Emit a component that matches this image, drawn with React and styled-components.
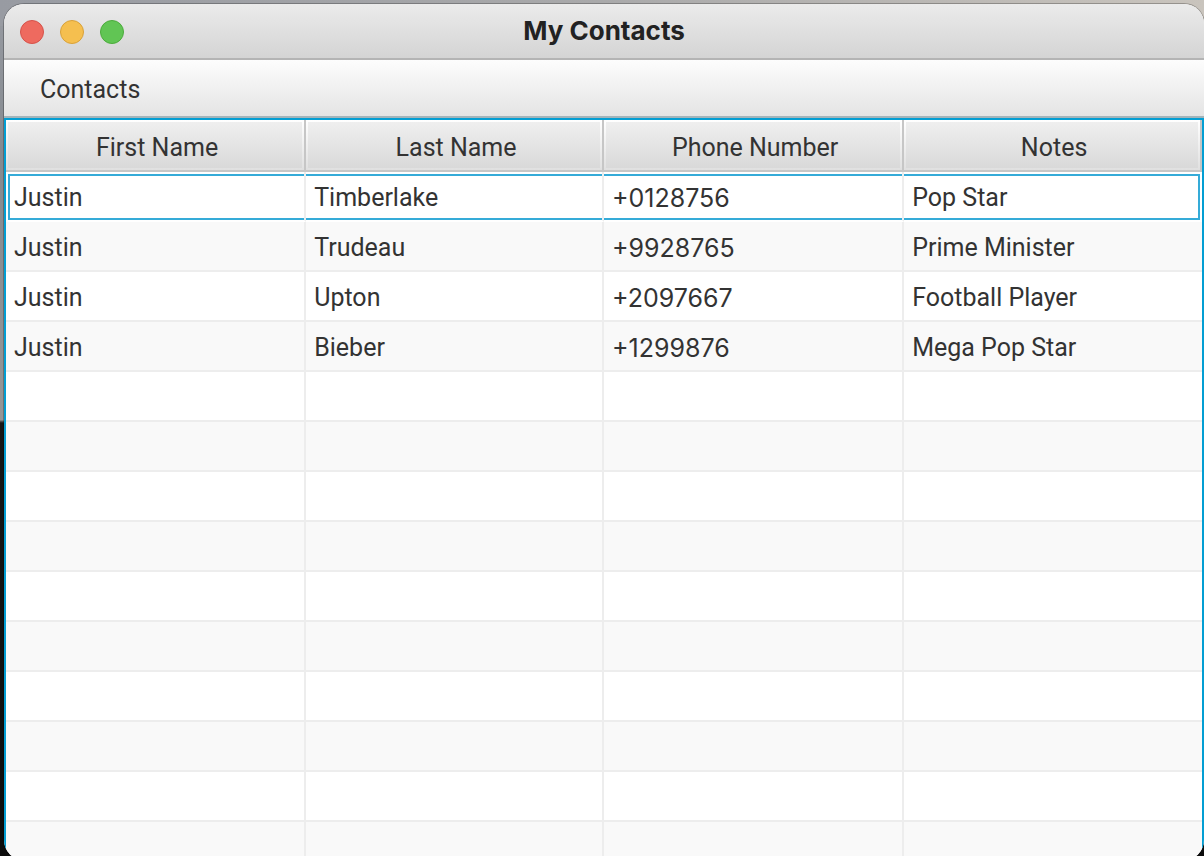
import React from "react";
import styled, { createGlobalStyle, css } from "styled-components";

const FONT = 'Roboto, "Liberation Sans", sans-serif';
const WIDE_FONT = 'Inter, "Liberation Sans", sans-serif';
const ACCENT = "#039ed3";

const GlobalStyle = createGlobalStyle`
  *, *::before, *::after { box-sizing: border-box; }
  body { margin: 0; overflow: hidden; }
`;

const Desktop = styled.div`
  height: 100vh;
  padding: 4px 0 0 4px;
  overflow: hidden;
  font-family: ${FONT};
  color: #333333;
  background:
    linear-gradient(90deg, #989ba2, #a9a9aa 50%, #c9c4bd) top / 100% 26px no-repeat,
    linear-gradient(180deg, #989ba2 0, #858a90 150px, #969696 420px, #5d5d5d 421px, #161616 423px, #0c0c0c 100%);
`;

const Window = styled.main`
  display: flex;
  flex-direction: column;
  height: 100vh;
  border-radius: 20px;
  overflow: hidden;
  background: #ffffff;
  box-shadow: 0 0 0 1px rgba(0, 0, 0, 0.25);
`;

const TitleBar = styled.header`
  display: grid;
  grid-template-columns: 1fr auto 1fr;
  align-items: center;
  flex: none;
  height: 56px;
  padding: 2px 16px 0;
  background: linear-gradient(#ebebeb, #d4d4d4);
  border-bottom: 2px solid #b4b4b4;
`;

const WindowControls = styled.div`
  display: flex;
  gap: 16px;
`;

const ControlButton = styled.button`
  width: 24px;
  height: 24px;
  padding: 0;
  border: 1px solid ${(p) => p.$edge};
  border-radius: 50%;
  background: ${(p) => p.$fill};
`;

const Title = styled.h1`
  margin: 0;
  padding-bottom: 2px;
  font-family: ${WIDE_FONT};
  font-size: 26px;
  line-height: 32px;
  font-weight: 700;
  color: #222222;
`;

const MenuBar = styled.nav`
  display: flex;
  flex: none;
  height: 58px;
  padding: 4px 20px 0;
  background: linear-gradient(#fdfdfd, #e4e4e4);
  border-bottom: 2px solid #a3b4ba;
`;

const MenuButton = styled.button`
  padding: 0 16px;
  border: 0;
  background: transparent;
  font: 400 25px/32px ${FONT};
  color: inherit;
`;

const TableFrame = styled.section`
  flex: 1;
  min-height: 0;
  overflow: hidden;
  border: 2px solid ${ACCENT};
  border-bottom: 0;
`;

const Table = styled.table`
  width: 100%;
  table-layout: fixed;
  border-collapse: separate;
  border-spacing: 0;
  font-size: 25px;
  line-height: 32px;
`;

const Column = styled.col`
  width: ${(p) => p.$width};
`;

const HeaderCell = styled.th`
  height: 52px;
  padding: 6px 0 0 4px;
  font-weight: 400;
  text-align: center;
  border-right: 2px solid #c6c6c6;
  border-bottom: 2px solid #c6c6c6;
  background:
    linear-gradient(#efefef, #d9d9d9) padding-box center / calc(100% - 4px) calc(100% - 4px) no-repeat,
    linear-gradient(#ffffff, #e0e0e0) padding-box;
`;

const Cell = styled.td`
  height: 50px;
  padding: 2px 0 0;
  border-right: 2px solid #ededed;
  border-bottom: 2px solid #ededed;

  &:last-child { border-right: 0; }
`;

const CellText = styled.div`
  padding: 2px 8px 0;
  overflow: hidden;
  white-space: nowrap;
  font-family: ${(p) => (p.$numeric ? WIDE_FONT : FONT)};
`;

const focused = css`
  ${Cell} {
    border-bottom-color: #ffffff;
  }
  ${CellText} {
    height: 46px;
    padding: 6px 8px 4px;
    border: 0 solid #35abd8;
    border-width: 2px 0;
  }
  ${Cell}:first-child ${CellText} {
    margin-left: 2px;
    padding-left: 4px;
    border-left-width: 2px;
  }
  ${Cell}:last-child ${CellText} {
    margin-right: 2px;
    border-right-width: 2px;
  }
`;

const Row = styled.tr`
  background: #ffffff;
  &:nth-child(even) { background: #f9f9f9; }
  ${(p) => p.$focused && focused}
`;

const controls = [
  { label: "Close", fill: "#ee6a5f", edge: "#d5524a" },
  { label: "Minimize", fill: "#f5bf4f", edge: "#d8a13a" },
  { label: "Zoom", fill: "#61c554", edge: "#4cab3c" },
];

const columns = [
  { name: "First Name", width: "25.1%" },
  { name: "Last Name", width: "24.9%" },
  { name: "Phone Number", width: "25.1%", numeric: true },
  { name: "Notes", width: "24.9%" },
];

const contacts = [
  ["Justin", "Timberlake", "+0128756", "Pop Star"],
  ["Justin", "Trudeau", "+9928765", "Prime Minister"],
  ["Justin", "Upton", "+2097667", "Football Player"],
  ["Justin", "Bieber", "+1299876", "Mega Pop Star"],
];

const emptyRows = Array.from({ length: 20 }, (_, i) => i);

export default function App() {
  return (
    <>
      <GlobalStyle />
      <Desktop>
        <Window>
          <TitleBar>
            <WindowControls>
              {controls.map((c) => (
                <ControlButton key={c.label} type="button" aria-label={c.label} $fill={c.fill} $edge={c.edge} />
              ))}
            </WindowControls>
            <Title>My Contacts</Title>
          </TitleBar>
          <MenuBar>
            <MenuButton type="button">Contacts</MenuButton>
          </MenuBar>
          <TableFrame>
            <Table>
              <colgroup>
                {columns.map((c) => <Column key={c.name} $width={c.width} />)}
              </colgroup>
              <thead>
                <tr>
                  {columns.map((c) => <HeaderCell key={c.name} scope="col">{c.name}</HeaderCell>)}
                </tr>
              </thead>
              <tbody>
                {contacts.map((contact, i) => (
                  <Row key={contact[1]} $focused={i === 0}>
                    {contact.map((value, j) => (
                      <Cell key={columns[j].name}>
                        <CellText $numeric={columns[j].numeric}>{value}</CellText>
                      </Cell>
                    ))}
                  </Row>
                ))}
                {emptyRows.map((i) => (
                  <Row key={i}>
                    {columns.map((c) => <Cell key={c.name} />)}
                  </Row>
                ))}
              </tbody>
            </Table>
          </TableFrame>
        </Window>
      </Desktop>
    </>
  );
}
